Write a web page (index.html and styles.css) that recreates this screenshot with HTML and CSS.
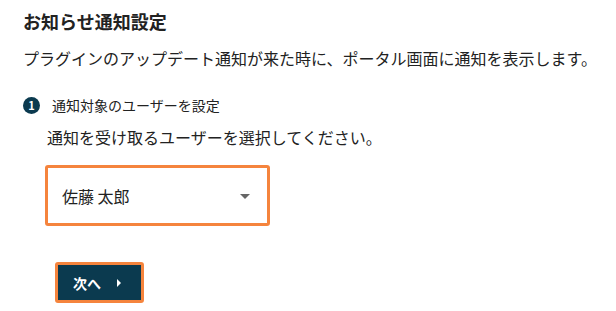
FILE: index.html
```html
<!DOCTYPE html>
<html lang="ja">
<head>
<meta charset="UTF-8">
<meta name="viewport" content="width=device-width, initial-scale=1.0">
<title>お知らせ通知設定</title>
<link rel="stylesheet" href="styles.css">
</head>
<body>
<div class="page">
  <h1 class="title">お知らせ通知設定</h1>
  <p class="desc">プラグインのアップデート通知が来た時に、ポータル画面に通知を表示します。</p>

  <div class="step">
    <span class="step-num">1</span>
    <span class="step-label">通知対象のユーザーを設定</span>
  </div>

  <div class="step-body">
    <p class="hint">通知を受け取るユーザーを選択してください。</p>

    <div class="select">
      <span class="select-value">佐藤 太郎</span>
      <span class="select-arrow"></span>
    </div>

    <button class="next-btn">次へ <span class="next-arrow"></span></button>
  </div>
</div>
</body>
</html>
```

FILE: styles.css
```css
/* お知らせ通知設定 */
body {
  margin: 0;
  font-family: "Noto Sans CJK JP", "Noto Sans", sans-serif;
  color: #222;
  background: #fff;
}

.page {
  padding: 8px 23px;
}

.title {
  margin: 0;
  font-size: 18px;
  line-height: 27px;
  font-weight: bold;
}

.desc {
  margin: 11px 0 0;
  font-size: 16px;
  line-height: 24px;
  white-space: nowrap;
}

.step {
  display: flex;
  align-items: center;
  gap: 12px;
  margin-top: 25px;
  height: 20px;
}

.step-num {
  width: 17px;
  height: 17px;
  border-radius: 50%;
  background: #0b3a4f;
  color: #fff;
  font-size: 11px;
  font-weight: bold;
  display: flex;
  align-items: center;
  justify-content: center;
}

.step-label {
  font-size: 14px;
}

.step-body {
  padding-left: 22px;
}

.hint {
  margin: 10px 0 0 2px;
  font-size: 16px;
  line-height: 24px;
}

.select {
  margin-top: 16px;
  width: 225px;
  height: 61px;
  box-sizing: border-box;
  border: 3px solid #f5843d;
  border-radius: 3px;
  display: flex;
  align-items: center;
  justify-content: space-between;
  padding: 0 17px 0 14px;
}

.select-value {
  font-size: 16px;
}

.select-arrow {
  width: 0;
  height: 0;
  border-left: 5px solid transparent;
  border-right: 5px solid transparent;
  border-top: 5px solid #666;
  margin-top: 2px;
}

.next-btn {
  margin: 36px 0 0 10px;
  width: 89px;
  height: 41px;
  box-sizing: border-box;
  border: 3px solid #f5843d;
  border-radius: 3px;
  background: #0b3a4f;
  color: #fff;
  font-family: inherit;
  font-size: 14px;
  font-weight: bold;
  display: flex;
  align-items: center;
  padding: 0 0 0 15px;
  cursor: pointer;
}

.next-arrow {
  width: 0;
  height: 0;
  border-top: 4px solid transparent;
  border-bottom: 4px solid transparent;
  border-left: 4px solid #fff;
  margin-left: 16px;
}
```
